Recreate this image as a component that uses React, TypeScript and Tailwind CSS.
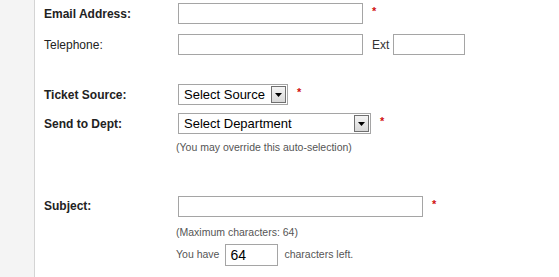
import { ReactNode } from "react";

const font = "font-['Liberation_Sans',Arial,sans-serif]";

function Star() {
  return <span className="ml-[9px] -mt-[4px] text-[11px] font-bold text-[#d01010]">*</span>;
}

function TextBox({ width, value }: { width: string; value?: string }) {
  return (
    <div
      className={`${width} h-[21px] border border-[#a5a5a5] bg-white px-[4px] text-[14px] leading-[19px] text-black`}
    >
      {value}
    </div>
  );
}

function SelectBox({ width, label }: { width: string; label: string }) {
  return (
    <div
      className={`${width} flex h-[21px] items-center justify-between border border-[#a5a5a5] bg-white pl-[5px] pr-[1px]`}
    >
      <span className="text-[13px] leading-none text-black">{label}</span>
      <span className="flex h-[17px] w-[15px] items-center justify-center border border-[#707070] bg-gradient-to-b from-[#f4f4f4] to-[#d8d8d8]">
        <svg width="7" height="4" viewBox="0 0 7 4">
          <path d="M0 0h7L3.5 4z" fill="#000" />
        </svg>
      </span>
    </div>
  );
}

function Row({ label, bold, children, className = "" }: { label?: string; bold?: boolean; children: ReactNode; className?: string }) {
  return (
    <div className={`flex items-center ${className}`}>
      <div className={`w-[134px] shrink-0 text-[12px] text-[#222] ${bold ? "font-bold" : ""}`}>{label}</div>
      <div className="flex items-center">{children}</div>
    </div>
  );
}

function Note({ children, className = "" }: { children: ReactNode; className?: string }) {
  return <div className={`pl-[132px] text-[10.5px] text-[#555] ${className}`}>{children}</div>;
}

export default function App() {
  return (
    <div className={`flex h-[277px] w-[559px] overflow-hidden bg-white ${font}`}>
      <div className="w-[35px] shrink-0 border-r border-[#d4d4d4] bg-[#f4f4f4]" />
      <div className="flex flex-1 flex-col pl-[9px] pt-[3px]">
        <Row label="Email Address:" bold>
          <TextBox width="w-[185px]" />
          <Star />
        </Row>
        <Row label="Telephone:" className="mt-[10px]">
          <TextBox width="w-[185px]" />
          <span className="ml-[9px] mr-[4px] text-[12px] text-[#333]">Ext</span>
          <TextBox width="w-[72px]" />
        </Row>
        <Row label="Ticket Source:" bold className="mt-[29px]">
          <SelectBox width="w-[110px]" label="Select Source" />
          <Star />
        </Row>
        <Row label="Send to Dept:" bold className="mt-[8px]">
          <SelectBox width="w-[193px]" label="Select Department" />
          <Star />
        </Row>
        <Note className="mt-[6px]">(You may override this auto-selection)</Note>
        <Row label="Subject:" bold className="mt-[40px]">
          <TextBox width="w-[245px]" />
          <Star />
        </Row>
        <Note className="mt-[8px]">(Maximum characters: 64)</Note>
        <div className="mt-[3px] flex items-center pl-[132px]">
          <span className="text-[10.5px] text-[#555]">You have</span>
          <div className="ml-[6px] h-[22px] w-[53px] border border-[#a5a5a5] px-[4px] text-[14px] leading-[20px]">64</div>
          <span className="ml-[6px] text-[10.5px] text-[#555]">characters left.</span>
        </div>
      </div>
    </div>
  );
}
